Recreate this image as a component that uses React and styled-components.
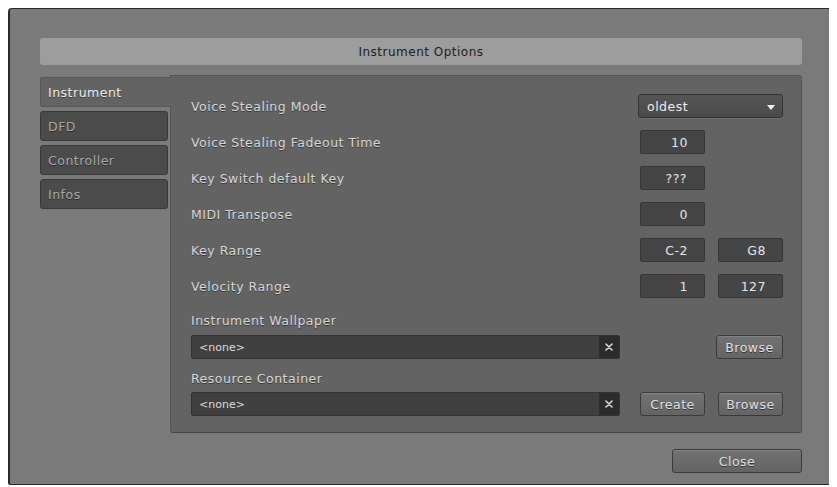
import styled, { createGlobalStyle } from 'styled-components';

const GlobalStyle = createGlobalStyle`
  body {
    margin: 8px;
    background: #ffffff;
    font-family: "DejaVu Sans", Verdana, sans-serif;
  }
`;

const Window = styled.div`
  box-sizing: border-box;
  width: 825px;
  height: 477px;
  background: #7a7a7a;
  border: 1px solid #2a2a2a;
  border-left-width: 2px;
  border-radius: 4px 4px 2px 2px;
  padding: 29px 30px 0 30px;
  display: flex;
  flex-direction: column;
  font-size: 12.5px;
  letter-spacing: 0.5px;
`;

const TitleBar = styled.div`
  height: 27px;
  background: #9d9d9d;
  border-radius: 3px;
  display: flex;
  align-items: center;
  justify-content: center;
  color: #1e1e1e;
  font-size: 12px;
`;

const Body = styled.div`
  display: flex;
  margin-top: 10px;
  height: 358px;
`;

const Tabs = styled.div`
  width: 130px;
  display: flex;
  flex-direction: column;
  gap: 4px;
  padding-top: 2px;
`;

const Tab = styled.div`
  box-sizing: border-box;
  height: 30px;
  width: ${({ $active }) => ($active ? '131px' : '128px')};
  margin-right: ${({ $active }) => ($active ? '-1px' : '0')};
  display: flex;
  align-items: center;
  padding-left: 7px;
  background: ${({ $active }) => ($active ? '#636363' : '#4b4b4b')};
  border: 1px solid ${({ $active }) => ($active ? '#585858' : '#383838')};
  border-right: ${({ $active }) => ($active ? 'none' : '1px solid #383838')};
  border-radius: ${({ $active }) => ($active ? '3px 0 0 3px' : '3px')};
  color: ${({ $active }) => ($active ? '#efefef' : '#a9a9a9')};
  text-shadow: 0 1px 0 rgba(0, 0, 0, 0.45);
  position: relative;
  z-index: 1;
`;

const Panel = styled.div`
  box-sizing: border-box;
  flex: 1;
  background: #636363;
  border: 1px solid #555555;
  border-bottom-color: #444444;
  border-radius: 0 3px 3px 3px;
  padding: 12px 18px 0 20px;
  display: flex;
  flex-direction: column;
`;

const Row = styled.div`
  height: 36px;
  display: flex;
  align-items: center;
`;

const Label = styled.div`
  flex: 1;
  color: #d8d8d8;
  text-shadow: 0 1px 0 rgba(0, 0, 0, 0.45);
`;

const Controls = styled.div`
  width: 145px;
  display: flex;
  gap: 13px;
  justify-content: ${({ $end }) => ($end ? 'flex-end' : 'flex-start')};
  padding-left: 2px;
  box-sizing: border-box;
`;

const Select = styled.div`
  box-sizing: border-box;
  width: 145px;
  margin-left: -2px;
  height: 24px;
  background: linear-gradient(#555555, #4a4a4a);
  border: 1px solid #333333;
  border-radius: 3px;
  display: flex;
  align-items: center;
  justify-content: space-between;
  padding: 0 7px 0 8px;
  color: #ececec;
  box-shadow: 0 1px 0 rgba(255, 255, 255, 0.08);
`;

const Arrow = styled.span`
  width: 0;
  height: 0;
  border-left: 4px solid transparent;
  border-right: 4px solid transparent;
  border-top: 5px solid #f0f0f0;
  margin-top: 2px;
`;

const NumField = styled.div`
  box-sizing: border-box;
  width: 65px;
  height: 24px;
  background: #454545;
  border: 1px solid #353535;
  border-radius: 2px;
  display: flex;
  align-items: center;
  justify-content: flex-end;
  padding-right: ${({ $pad }) => $pad || 16}px;
  color: #e6e6e6;
`;

const SubLabel = styled.div`
  height: 20px;
  display: flex;
  align-items: flex-end;
  color: #d8d8d8;
  text-shadow: 0 1px 0 rgba(0, 0, 0, 0.45);
  margin-top: ${({ $top }) => $top}px;
`;

const PathRow = styled.div`
  display: flex;
  align-items: center;
  margin-top: ${({ $top }) => $top || 0}px;
`;

const PathField = styled.div`
  box-sizing: border-box;
  width: 429px;
  height: 24px;
  background: #404040;
  border: 1px solid #333333;
  border-radius: 2px;
  display: flex;
  align-items: stretch;
  margin-right: 18px;
`;

const PathText = styled.div`
  flex: 1;
  display: flex;
  align-items: center;
  padding-left: 7px;
  color: #dcdcdc;
  font-size: 11px;
  letter-spacing: 0;
`;

const Clear = styled.div`
  width: 20px;
  background: #2c2c2c;
  display: flex;
  align-items: center;
  justify-content: center;
`;

const Button = styled.div`
  box-sizing: border-box;
  width: ${({ $w }) => $w || 67}px;
  height: 24px;
  background: linear-gradient(#727272, #646464);
  border: 1px solid #3a3a3a;
  border-radius: 3px;
  display: flex;
  align-items: center;
  justify-content: center;
  color: #e2e2e2;
  text-shadow: 0 1px 0 rgba(0, 0, 0, 0.5);
  box-shadow: inset 0 1px 0 rgba(255, 255, 255, 0.12);
`;

const Footer = styled.div`
  display: flex;
  justify-content: flex-end;
  margin-top: 16px;
`;

const rows = [
  { label: 'Voice Stealing Mode', select: 'oldest' },
  { label: 'Voice Stealing Fadeout Time', values: ['10'] },
  { label: 'Key Switch default Key', values: ['???'], pad: 17 },
  { label: 'MIDI Transpose', values: ['0'] },
  { label: 'Key Range', values: ['C-2', 'G8'] },
  { label: 'Velocity Range', values: ['1', '127'] },
];

const XIcon = () => (
  <svg width="8" height="8" viewBox="0 0 8 8">
    <path d="M1 1L7 7M7 1L1 7" stroke="#d8d8d8" strokeWidth="1.6" strokeLinecap="round" />
  </svg>
);

export default function App() {
  return (
    <>
      <GlobalStyle />
      <Window>
        <TitleBar>Instrument Options</TitleBar>
        <Body>
          <Tabs>
            <Tab $active>Instrument</Tab>
            <Tab>DFD</Tab>
            <Tab>Controller</Tab>
            <Tab>Infos</Tab>
          </Tabs>
          <Panel>
            {rows.map((r) => (
              <Row key={r.label}>
                <Label>{r.label}</Label>
                <Controls>
                  {r.select ? (
                    <Select>
                      {r.select}
                      <Arrow />
                    </Select>
                  ) : (
                    r.values.map((v) => (
                      <NumField key={v} $pad={r.pad}>
                        {v}
                      </NumField>
                    ))
                  )}
                </Controls>
              </Row>
            ))}
            <SubLabel $top={4}>Instrument Wallpaper</SubLabel>
            <PathRow $top={7}>
              <PathField>
                <PathText>&lt;none&gt;</PathText>
                <Clear>
                  <XIcon />
                </Clear>
              </PathField>
              <Controls $end>
                <Button>Browse</Button>
              </Controls>
            </PathRow>
            <SubLabel $top={7}>Resource Container</SubLabel>
            <PathRow $top={6}>
              <PathField>
                <PathText>&lt;none&gt;</PathText>
                <Clear>
                  <XIcon />
                </Clear>
              </PathField>
              <Controls>
                <Button>Create</Button>
                <Button>Browse</Button>
              </Controls>
            </PathRow>
          </Panel>
        </Body>
        <Footer>
          <Button $w={130}>Close</Button>
        </Footer>
      </Window>
    </>
  );
}
